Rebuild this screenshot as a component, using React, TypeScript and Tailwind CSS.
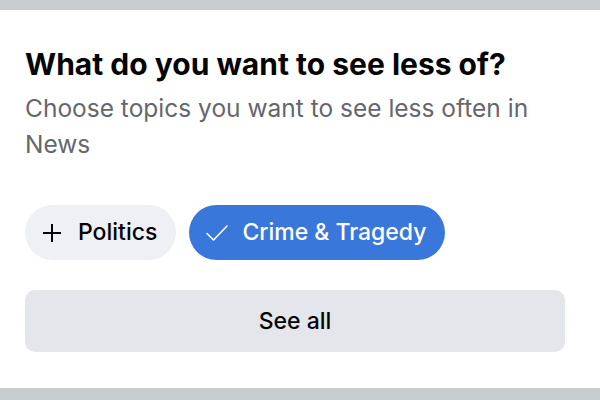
export default function App() {
  return (
    <div
      className="flex h-[400px] w-[600px] flex-col bg-white"
      style={{ fontFamily: "Inter, 'Noto Sans', sans-serif" }}
    >
      <div className="h-[10px] bg-[#c9ccd1]" />
      <div className="flex flex-1 flex-col pl-[25px] pr-[35px] pt-[36px]">
        <h1 className="text-[30px] font-bold leading-[36px] text-[#050505]">
          What do you want to see less of?
        </h1>
        <p className="mt-[8px] text-[24.5px] leading-[36px] text-[#65676b]">
          Choose topics you want to see less often in News
        </p>
        <div className="mt-[43px] flex gap-[13px]">
          <button className="flex h-[55px] items-center gap-[17px] rounded-full bg-[#eff0f3] pl-[18px] pr-[19px] text-[23px] font-medium text-[#050505]">
            <svg width="18" height="18" viewBox="0 0 18 18">
              <path d="M9 0v18M0 9h18" stroke="#050505" strokeWidth="2" fill="none" />
            </svg>
            Politics
          </button>
          <button className="flex h-[55px] items-center gap-[14px] rounded-full bg-[#3a77db] pl-[17px] pr-[19px] text-[23px] font-medium text-white">
            <svg width="22" height="16" viewBox="0 0 22 16">
              <path
                d="M1 8.5l6.5 6.5L21 1"
                stroke="#ffffff"
                strokeWidth="1.6"
                fill="none"
                strokeLinecap="round"
                strokeLinejoin="round"
              />
            </svg>
            Crime &amp; Tragedy
          </button>
        </div>
        <button className="mt-[30px] flex h-[62px] w-full items-center justify-center rounded-[10px] bg-[#e4e6eb] text-[23px] font-medium text-[#050505]">
          See all
        </button>
      </div>
      <div className="h-[12px] bg-[#c9ccd1]" />
    </div>
  );
}
